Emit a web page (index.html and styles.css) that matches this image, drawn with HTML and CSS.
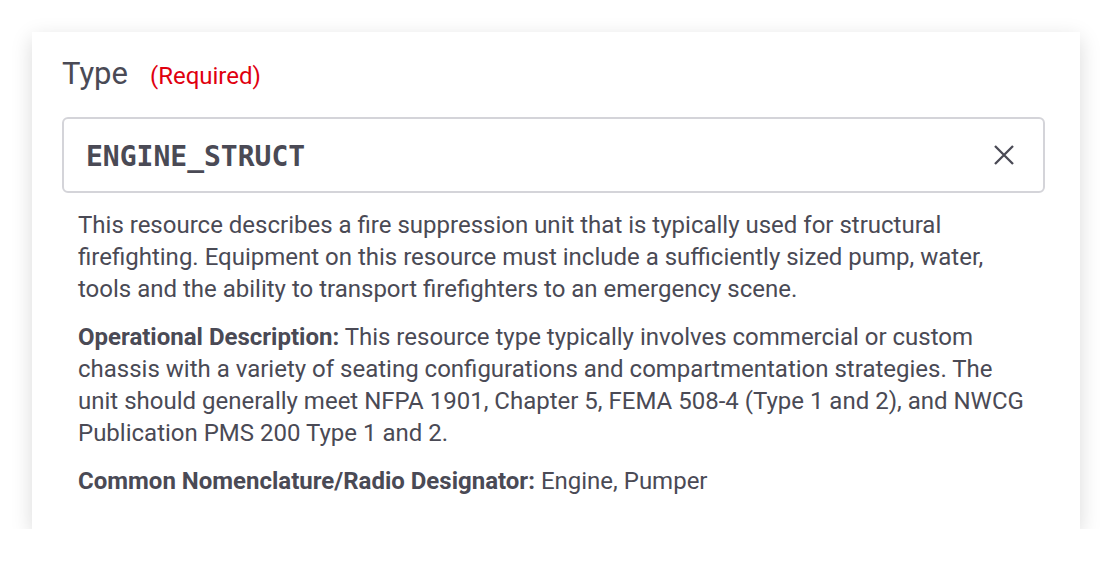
FILE: index.html
```html
<!DOCTYPE html>
<html lang="en">
<head>
<meta charset="utf-8">
<title>Type</title>
<link rel="stylesheet" href="styles.css">
</head>
<body>
<div class="card">
  <div class="label-row">
    <span class="label">Type</span>
    <span class="required">(Required)</span>
  </div>
  <div class="field">
    <span class="value">ENGINE_STRUCT</span>
    <svg class="clear" width="22" height="22" viewBox="0 0 22 22" aria-hidden="true">
      <path d="M2 2 L20 20 M20 2 L2 20" stroke="#4a4a55" stroke-width="2.3" stroke-linecap="butt" fill="none"/>
    </svg>
  </div>
  <div class="desc">
    <p>This resource describes a fire suppression unit that is typically used for structural firefighting. Equipment on this resource must include a sufficiently sized pump, water, tools and the ability to transport firefighters to an emergency scene.</p>
    <p><strong>Operational Description:</strong> This resource type typically involves commercial or custom chassis with a variety of seating configurations and compartmentation strategies. The unit should generally meet NFPA 1901, Chapter 5, FEMA 508-4 (Type 1 and 2), and NWCG Publication PMS 200 Type 1 and 2.</p>
    <p><strong>Common Nomenclature/Radio Designator:</strong> Engine, Pumper</p>
  </div>
</div>
</body>
</html>
```

FILE: styles.css
```css
html, body {
  margin: 0;
  padding: 0;
  background: #ffffff;
}

body {
  font-family: Roboto, "Liberation Sans", sans-serif;
  color: #4a4a55;
}

.card {
  margin: 32px 0 0 32px;
  width: 1048px;
  box-sizing: border-box;
  padding: 28px 35px 32px 30px;
  background: #ffffff;
  box-shadow: 0 6px 20px rgba(0, 0, 0, 0.15);
}

.label-row {
  display: flex;
  align-items: baseline;
  gap: 22px;
  height: 28px;
  line-height: 28px;
}

.label {
  font-size: 31px;
  color: #4a4a55;
}

.required {
  font-size: 24px;
  color: #e0000f;
}

.field {
  margin-top: 29px;
  height: 76px;
  box-sizing: border-box;
  border: 2px solid #d4d4d9;
  border-radius: 6px;
  display: flex;
  align-items: center;
  justify-content: space-between;
  padding: 0 28px 0 22px;
}

.value {
  font-family: "DejaVu Sans Mono", "Liberation Mono", monospace;
  font-weight: bold;
  font-size: 28px;
  color: #4a4a55;
  padding-top: 2px;
}

.clear {
  display: block;
}

.desc {
  padding: 16px 16px 0 16px;
  font-size: 24px;
  line-height: 32px;
}

.desc p {
  margin: 0 0 16px 0;
}

.desc p:last-child {
  margin-bottom: 0;
}

.desc strong {
  font-weight: bold;
}
```
